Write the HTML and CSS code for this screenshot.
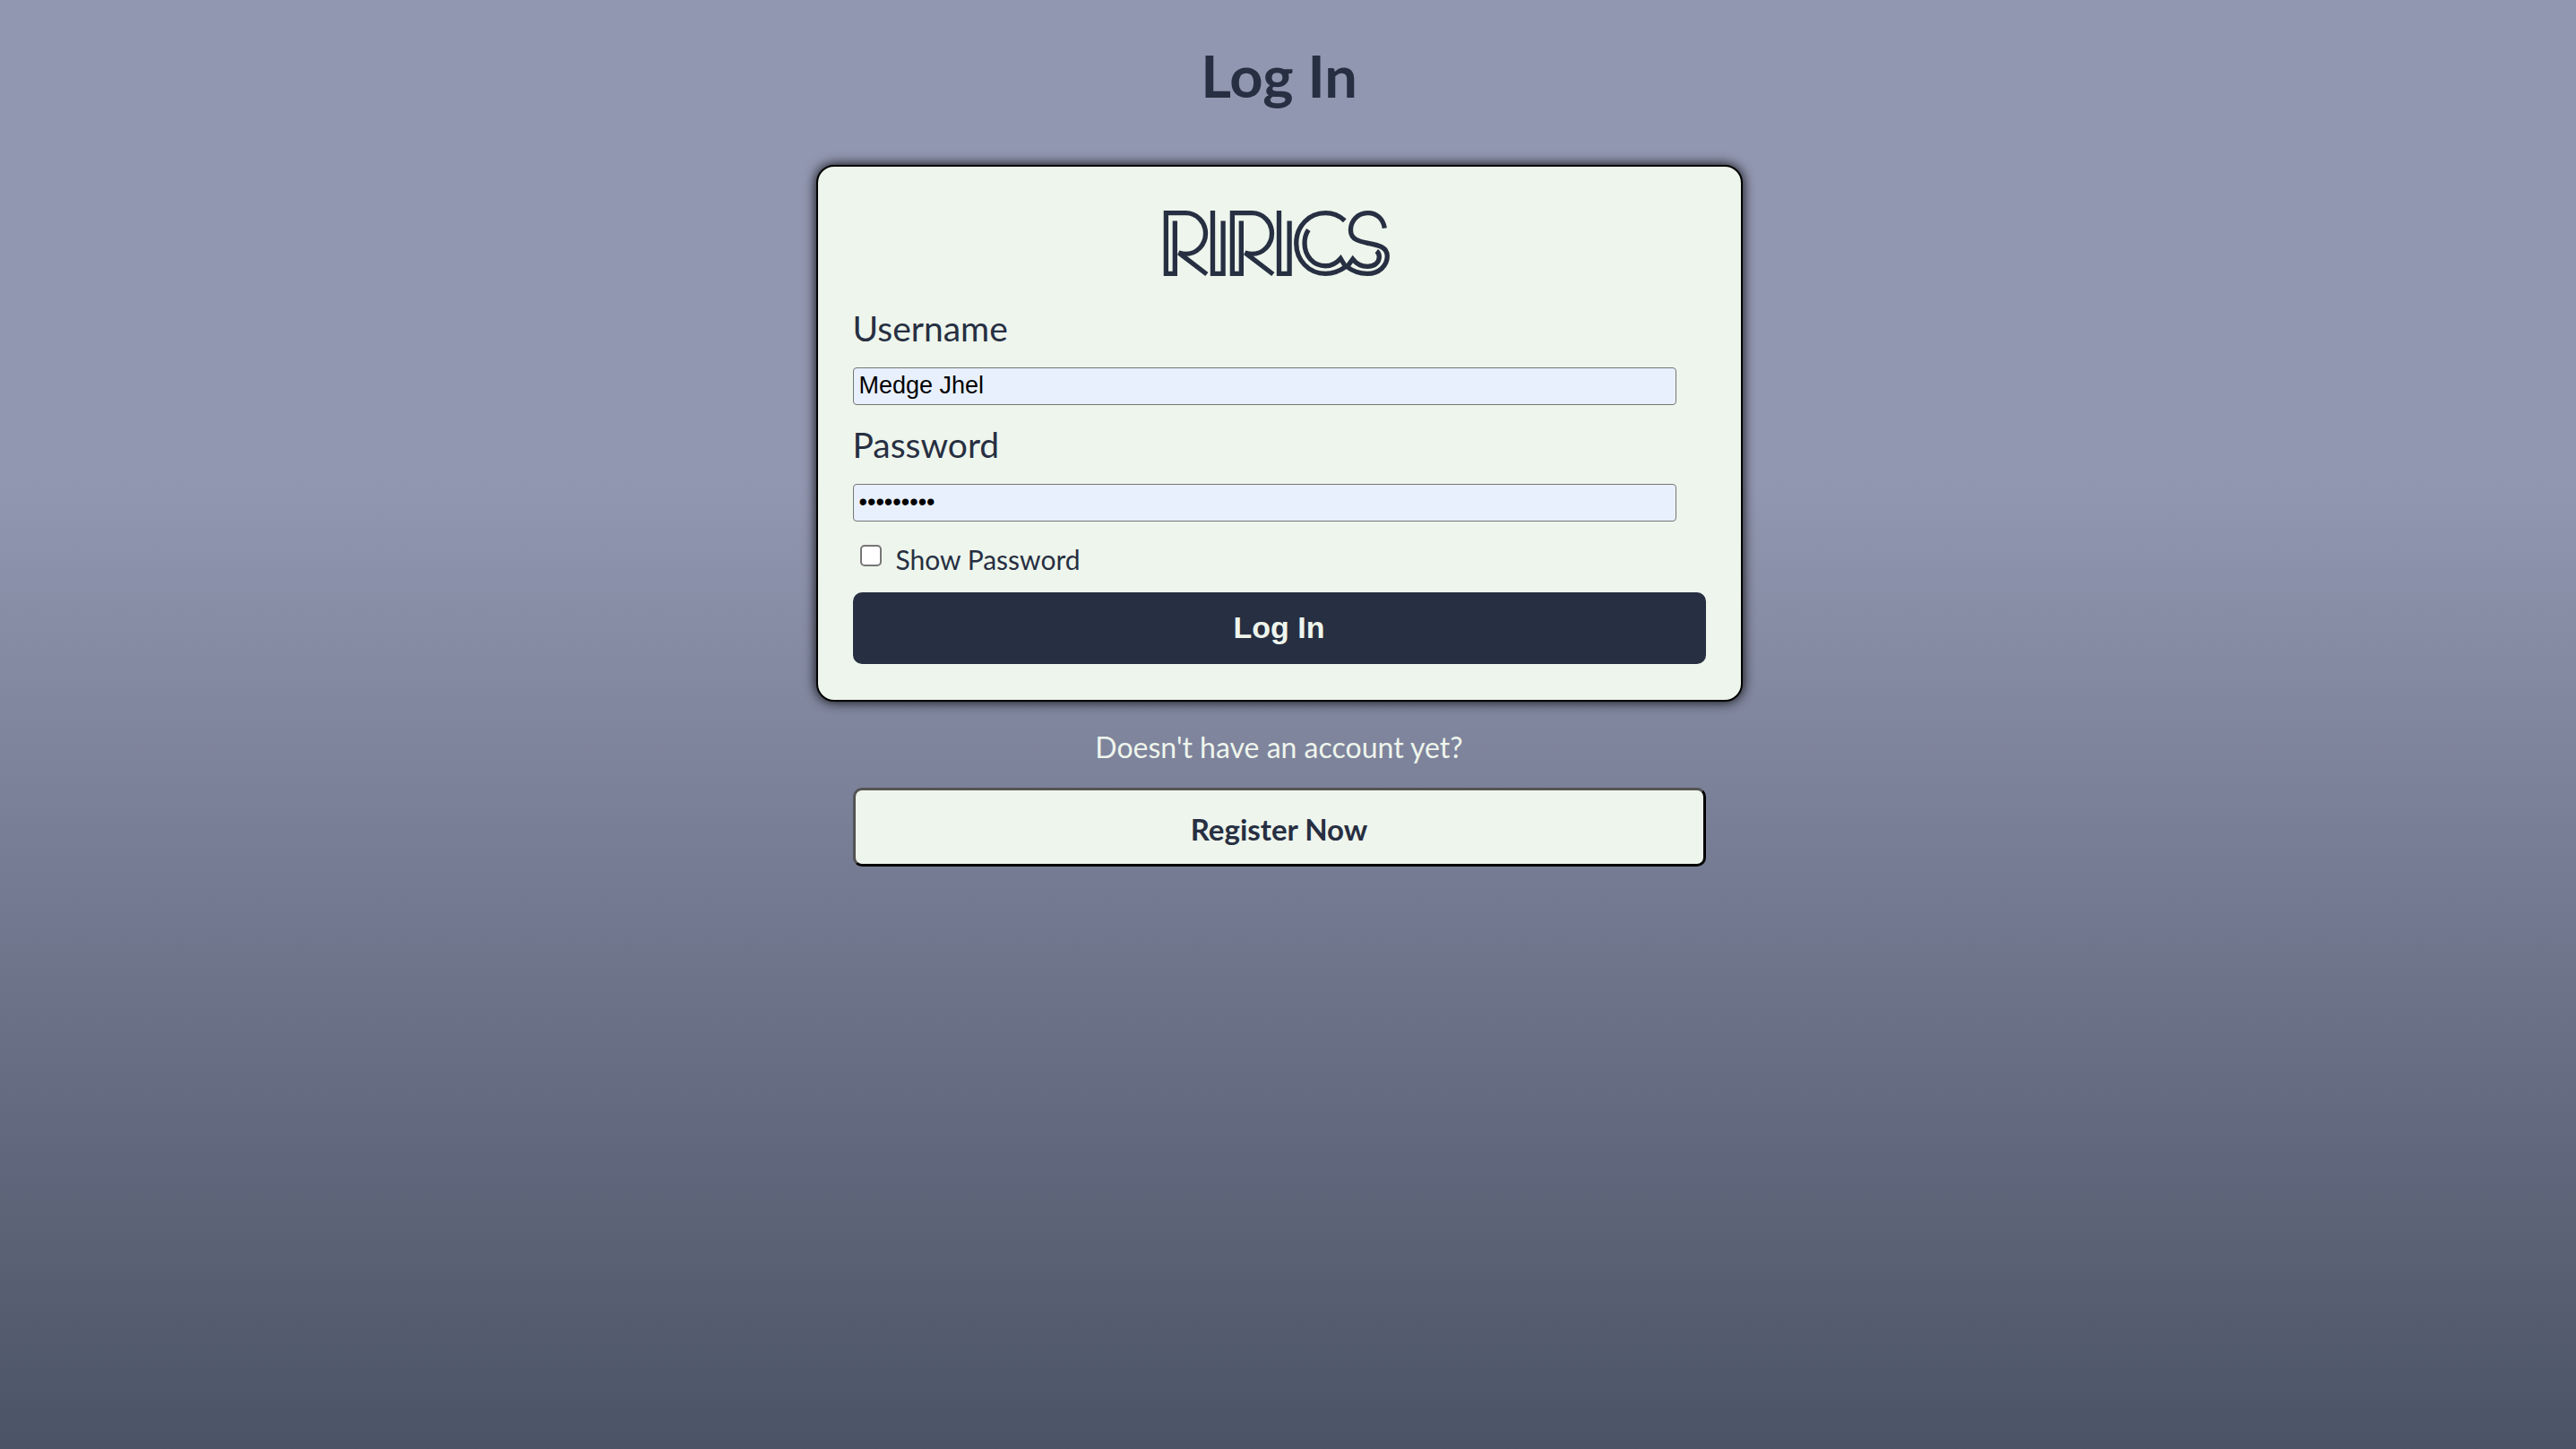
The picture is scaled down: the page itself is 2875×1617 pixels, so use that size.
FILE: index.html
```html
<!DOCTYPE html>
<html lang="en">
<head>
  <meta charset="utf-8">
  <meta name="viewport" content="width=device-width, initial-scale=1">
  <title>Log In</title>
  <link rel="stylesheet" href="styles.css">
</head>
<body class="page">
  <main class="login">
    <h1 class="title">Log In</h1>
    <form class="card">
      <svg class="logo" viewBox="50 70 766 226" role="img" aria-label="Rirics">
        <g fill="none" stroke="#272f42" stroke-width="16">
          <path d="M92 108V285H62V81H128A67 69 0 0 1 128 219C119 219 112 217 105 215L199 287"/>
          <path d="M219 73V285H254V108"/>
          <path d="M315 108V285H285V81H351A67 69 0 0 1 351 219C342 219 335 217 328 215L422 287"/>
          <path d="M442 73V285H477V108"/>
          <path d="M663 107C645 90 622 81 598 81C542 81 500 126 500 183C500 240 542 285 598 285C623 285 646 277 666 262L649 234C635 250 618 259 598 259C558 259 528 226 528 183C528 166 532 151 541 138"/>
          <path d="M797 132C792 100 770 81 741 81C708 81 683 106 683 139C683 203 806 164 806 226C806 259 777 285 740 285C713 285 690 277 671 262L690 236C703 253 720 261 740 261C764 261 779 247 779 228C779 220 776 214 770 209"/>
        </g>
      </svg>
      <label class="label" for="username">Username</label>
      <input class="field" id="username" name="username" type="text" value="Medge Jhel" autocomplete="username">
      <label class="label" for="password">Password</label>
      <input class="field" id="password" name="password" type="password" value="ririsongs" autocomplete="current-password">
      <div class="show">
        <input class="tick" id="show" type="checkbox">
        <label for="show">Show Password</label>
      </div>
      <button class="submit" type="submit">Log In</button>
    </form>
    <p class="prompt">Doesn't have an account yet?</p>
    <button class="register" type="button">Register Now</button>
  </main>
</body>
</html>
```
FILE: styles.css
```css
* {
  box-sizing: border-box;
}

.page {
  margin: 0;
  min-height: 100vh;
  padding: 44px 38px 44px 18px;
  color: #272f42;
  font-family: Lato, sans-serif;
  background: linear-gradient(#9297b1 33%, #4b5366 100%) no-repeat;
}

.login {
  display: flex;
  flex-direction: column;
  align-items: center;
  max-width: 1034px;
  margin: 0 auto;
}

.title {
  margin: 0 0 60px;
  font-size: 65px;
  line-height: 80px;
}

.card {
  display: flex;
  flex-direction: column;
  width: 100%;
  padding: 48px 39px 40px;
  border: 2px solid #000;
  border-radius: 20px;
  background: #eef5ec;
  box-shadow: 0 0 14px #000;
}

.logo {
  width: 255px;
  height: 75px;
  margin: 0 0 33px 345px;
}

.label {
  font-size: 39px;
  line-height: 48px;
  margin-bottom: 20px;
}

.field {
  width: calc(100% - 33px);
  height: 42px;
  margin: 0 0 20px;
  padding: 0 6px 2px;
  border: 1px solid #767676;
  border-radius: 4px;
  background: #e8f0fe;
  color: #000;
  font: 27px/38px "Liberation Sans", Arial, sans-serif;
}

.show {
  display: flex;
  align-items: center;
  gap: 16px;
  margin: 0 0 15px 8px;
  font-size: 30px;
  line-height: 44px;
}

.tick {
  width: 24px;
  height: 24px;
  margin: 0 0 8px;
  appearance: none;
  border: 2px solid #767676;
  border-radius: 5px;
  background: #fff;
}

.tick:checked {
  background: #272f42;
}

.submit {
  height: 80px;
  padding: 0 0 2px;
  border: 0;
  border-radius: 10px;
  background: #272f42;
  color: #eef5ec;
  font: bold 34px/40px "Liberation Sans", Arial, sans-serif;
}

.prompt {
  margin: 30px 0 24px;
  color: #eef5ec;
  font-size: 32px;
  line-height: 42px;
}

.register {
  width: calc(100% - 82px);
  height: 88px;
  padding: 4px 0 0;
  border: 3px outset #000;
  border-radius: 10px;
  background: #eef5ec;
  color: #272f42;
  font: bold 33px/40px Lato, sans-serif;
}
```
